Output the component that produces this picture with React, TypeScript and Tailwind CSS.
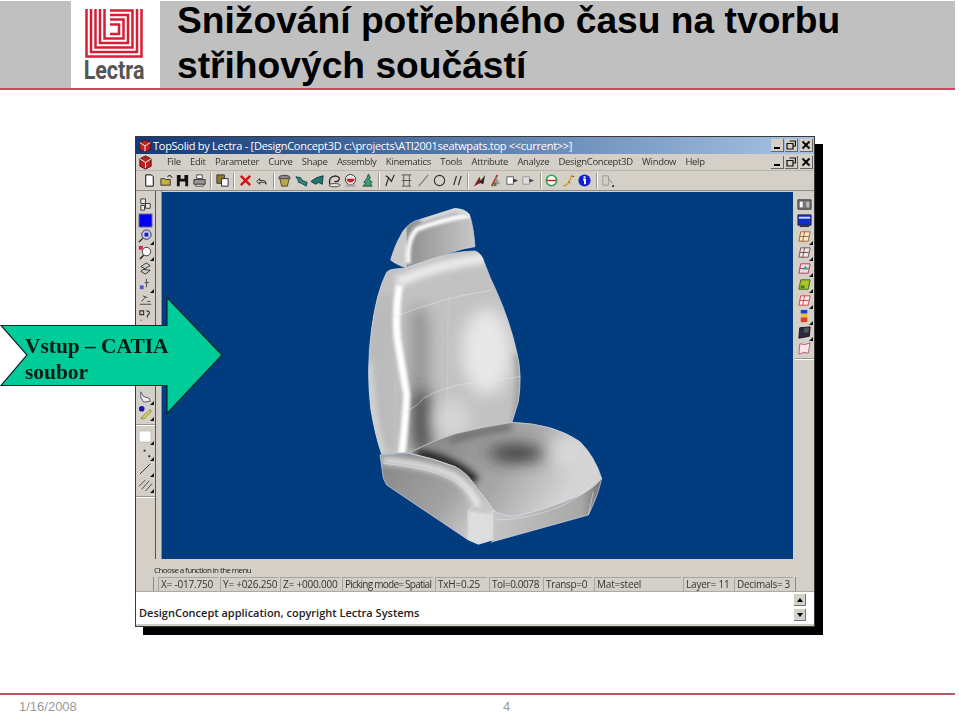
import React from "react";

const ui = "[font-family:'Open_Sans','Noto_Sans',sans-serif]";

type IconName = string;

function Glyph({ name }: { name: IconName }) {
  switch (name) {
    case "new":
      return <path d="M4 2h6l2 2v10H4z" fill="#fff" stroke="#000" />;
    case "open":
      return <><path d="M2 13V6h4l1 1h5v6z" fill="#c8b040" stroke="#333" /><path d="M9 4q3-3 5 1" fill="none" stroke="#000" /></>;
    case "save":
      return <path d="M2 2h4v4h4V2h4v12h-3V9H5v5H2z" fill="#111" />;
    case "print":
      return <><path d="M5 2h6v4H5z" fill="#fff" stroke="#444" /><path d="M2 7h12v5H2z" fill="#999" stroke="#333" /><path d="M4 12h8v2H4z" fill="#fff" stroke="#444" /></>;
    case "copy":
      return <><path d="M2 2h8v9H2z" fill="#8a7a30" stroke="#333" /><path d="M7 6h7v8H7z" fill="#fff" stroke="#224" /></>;
    case "x":
      return <path d="M3 3l10 10M13 3L3 13" stroke="#d81010" strokeWidth="2.6" />;
    case "undo":
      return <path d="M3 9l3-3v2h4q3 0 3 4q-2-3-4-2H6v2z" fill="none" stroke="#222" />;
    case "bucket":
      return <><ellipse cx="8" cy="5" rx="6" ry="2.5" fill="#888" stroke="#333" /><path d="M3 6l2 8h6l2-8z" fill="#b8a848" stroke="#444" /></>;
    case "teal1":
      return <path d="M2 4l5 1 2 3 5 2-1 4-5-3-3-1-1-3z" fill="#2a8a80" stroke="#145" />;
    case "teal2":
      return <path d="M1 9l6-4 7-2-1 9-4-2-3 2z" fill="#1a7a70" stroke="#134" />;
    case "swirl":
      return <><path d="M3 12q-2-8 6-9 5 1 4 4-1 3-5 2" fill="none" stroke="#222" strokeWidth="1.3" /><ellipse cx="8" cy="13" rx="6" ry="1.8" fill="#ddd" stroke="#444" /></>;
    case "red":
      return <><circle cx="8" cy="7" r="5.5" fill="#e8e8e8" stroke="#333" /><path d="M4 8q4 4 8 0v-2H4z" fill="#c82020" /><ellipse cx="8" cy="13.5" rx="6" ry="1.5" fill="#aaa" /></>;
    case "tree":
      return <path d="M9 1l2 4-1 2 3 3-2 1 2 3H3l3-3-2-1 3-4z" fill="#3a9a70" stroke="#255" />;
    case "corner":
      return <path d="M3 14l3-9 3 4 3-7M6 5l-3-2" fill="none" stroke="#222" strokeWidth="1.2" />;
    case "frame":
      return <path d="M3 2h10M3 14h10M5 2v12M11 2v12M3 8h10" fill="none" stroke="#555" />;
    case "line":
      return <path d="M3 14L13 2" stroke="#777" strokeWidth="1.2" />;
    case "circle":
      return <circle cx="8" cy="8" r="5.5" fill="none" stroke="#333" strokeWidth="1.2" />;
    case "par":
      return <path d="M5 13L8 3M10 13l3-10" stroke="#333" strokeWidth="1.3" />;
    case "dark":
      return <><path d="M2 14L8 4l2 6z" fill="#802020" /><path d="M8 10l6-8-2 10z" fill="#222" /></>;
    case "mix":
      return <><path d="M4 14L10 2" stroke="#b03030" strokeWidth="2" /><path d="M8 3l5 9H8z" fill="#999" /><path d="M6 10h3v4H6z" fill="#3a8a4a" /></>;
    case "box":
      return <><path d="M2 4h7v8H2z" fill="#fff" stroke="#555" /><path d="M9 6l5 2-5 2z" fill="#333" /></>;
    case "box2":
      return <><path d="M2 4h7v8H2z" fill="#ddd" stroke="#999" /><path d="M9 6l5 2-5 2z" fill="#444" /></>;
    case "ring":
      return <><circle cx="8" cy="8" r="5.5" fill="#fff" stroke="#3a9a50" strokeWidth="1.6" /><path d="M3 8h10" stroke="#c82020" strokeWidth="1.6" /></>;
    case "curve":
      return <><path d="M2 14q7-1 9-11" fill="none" stroke="#c8a020" strokeWidth="1.4" /><path d="M11 3l3 1M8 9l2 2" stroke="#c02020" /></>;
    case "info":
      return <><circle cx="8" cy="8" r="6.5" fill="#1020d0" /><path d="M8 3.5v2M6.5 7H8.5v5" stroke="#fff" strokeWidth="2" fill="none" /></>;
    case "disabled":
      return <><path d="M3 3h6v10H3z" fill="none" stroke="#999" /><path d="M9 6l4 5" stroke="#888" /><path d="M13 13h2v2h-2z" fill="#333" /></>;
    case "cluster":
      return <><path d="M3 2h5v5H3zM8 7h5v5H8zM3 9h4v5H3z" fill="#eee" stroke="#333" /></>;
    case "blue":
      return <path d="M1 1h14v14H1z" fill="#0000f0" stroke="#7a7a90" />;
    case "lens":
      return <><circle cx="9" cy="6" r="5" fill="#bcc8ff" stroke="#334" /><path d="M7 4h4v4H7z" fill="#2020a0" /><path d="M5 10l-4 4" stroke="#222" strokeWidth="1.5" /></>;
    case "lens2":
      return <><circle cx="9" cy="7" r="4.5" fill="#fff" stroke="#333" /><path d="M6 11l-4 4" stroke="#222" strokeWidth="1.5" /><path d="M1 1h4v4H1z" fill="#e02040" /></>;
    case "knot":
      return <path d="M3 6l6-4 4 3-7 4 7 1-5 4-5-3 4-3z" fill="#ccc" stroke="#333" />;
    case "move":
      return <><path d="M2 9h4v4H2z" fill="#5050d0" /><path d="M9 2v9M7 6h5" stroke="#444" /></>;
    case "dims":
      return <path d="M2 12h12M4 9l4-5M5 3l5 2M10 9h3" fill="none" stroke="#444" />;
    case "query":
      return <path d="M2 2h4v4H2zM9 2q4 0 3 3l-2 2v2M3 12h1" fill="none" stroke="#333" strokeWidth="1.2" />;
    case "clip":
      return <path d="M3 3l3 5 6 2 1 3-7 1-3-5z" fill="#eee" stroke="#556" />;
    case "key":
      return <><circle cx="4" cy="4" r="3" fill="#1818a0" /><path d="M3 14l10-9 1 2-8 8z" fill="#e8e030" stroke="#444" strokeWidth=".6" /></>;
    case "white":
      return <path d="M1 2h13v12H1z" fill="#fff" stroke="#bbb" />;
    case "dot":
      return <path d="M6 5h2v2H6zM11 11h2v2h-2z" fill="#222" />;
    case "diag":
      return <path d="M2 14L13 3" stroke="#333" />;
    case "hatch":
      return <path d="M1 10l7-7M4 13l8-9M8 15l7-8" stroke="#444" />;
    case "win":
      return <><path d="M1 3h14v10H1z" fill="#777" stroke="#333" /><path d="M3 5h3v6H3z" fill="#fff" /><path d="M10 5h3v6h-3z" fill="#bbb" /></>;
    case "blueprint":
      return <><path d="M1 2h14v11H1z" fill="#1030c8" stroke="#223" /><path d="M2 4h12v2H2z" fill="#dde" /><path d="M3 13h10v2H3z" fill="#334" /></>;
    case "g1":
      return <path d="M4 3h10l-2 10H2zM3 8h10M8 3l-2 10" fill="#f8e8d0" stroke="#a06030" />;
    case "g2":
      return <path d="M4 3h10l-2 10H2zM3 8h10M8 3l-2 10" fill="#f0e8e0" stroke="#705050" />;
    case "g3":
      return <><path d="M4 3h10l-2 10H2zM3 8h10" fill="#f0dce0" stroke="#a04060" /><path d="M6 9l3-4 3 4z" fill="#30a890" /></>;
    case "g4":
      return <><path d="M4 3h10l-2 10H2z" fill="#a8c820" stroke="#406030" /><path d="M6 5h3v3H6z" fill="#e8b020" /><path d="M4 9h4v3H4z" fill="#308030" /></>;
    case "g5":
      return <path d="M4 3h10l-2 10H2zM3 8h10M8 3l-2 10" fill="#fbeaea" stroke="#d04050" />;
    case "spectrum":
      return <><path d="M4 1h7v4H4z" fill="#1840d0" /><path d="M4 5h7v4H4z" fill="#e8c030" /><path d="M4 9h7v5H4z" fill="#e04020" /></>;
    case "solid":
      return <><path d="M3 3l11-1-1 10-11 2z" fill="#2a2a40" stroke="#111" /><path d="M8 3l5 0-1 5H7z" fill="#555" /></>;
    case "flag":
      return <path d="M3 3q5 2 11-1l-2 11q-4-2-10 1z" fill="#f8e4e8" stroke="#b06070" />;
    default:
      return null;
  }
}

function Icon({ name, flyout = false }: { name: IconName; flyout?: boolean }) {
  return (
    <div className="relative w-[16px] h-[16px] shrink-0">
      <svg viewBox="0 0 16 16" className="w-[15px] h-[15px]">
        <Glyph name={name} />
      </svg>
      {flyout && (
        <svg viewBox="0 0 4 4" className="absolute right-0 bottom-0 w-[4px] h-[4px]">
          <path d="M4 0v4H0z" fill="#111" />
        </svg>
      )}
    </div>
  );
}

function TopGroup({ icons }: { icons: string[] }) {
  return (
    <div className="flex gap-[0.5px]">
      {icons.map((n, i) => (
        <Icon key={i} name={n} />
      ))}
    </div>
  );
}

function Sep() {
  return <div className="w-[2px] h-[16px] mx-[2.5px] border-l border-l-[#9a978f] border-r border-r-white shrink-0" />;
}

function WinButtons() {
  return (
    <div className="flex gap-px">
      <div className="w-[13px] h-[13px] bg-[#d4d0c8] border-r border-b border-[#666] flex items-end justify-center pb-[2px]">
        <div className="w-[6px] h-[2px] bg-black" />
      </div>
      <div className="w-[13px] h-[13px] bg-[#d4d0c8] border-r border-b border-[#666] flex items-center justify-center">
        <svg viewBox="0 0 10 10" className="w-[10px] h-[10px]">
          <path d="M3.5 1h6v5H7.5M1 3.5h6v5.5H1z" fill="none" stroke="#111" strokeWidth="1.2" />
        </svg>
      </div>
      <div className="w-[13px] h-[13px] ml-px bg-[#d4d0c8] border-r border-b border-[#666] flex items-center justify-center">
        <svg viewBox="0 0 10 10" className="w-[10px] h-[10px]">
          <path d="M1.5 1.5l7 7M8.5 1.5l-7 7" stroke="#000" strokeWidth="1.9" />
        </svg>
      </div>
    </div>
  );
}

function Logo() {
  return (
    <div className="w-[89px] h-[87px] bg-white flex flex-col items-center pt-[8px] pr-[3px] shrink-0">
      <svg viewBox="0 0 58 49" className="w-[58px] h-[49px]">
        <g fill="none" stroke="#d81e36" strokeWidth="2.5">
          <path d="M1.5 0V47.5H56.5V0" />
          <path d="M6 0V43H52V0" />
          <path d="M10.5 0V38.5H47.5V1.5H25" />
          <path d="M15 0V34H43V6H25" />
          <path d="M19.5 0V29.5H38.5V10.5H25" />
          <path d="M25 15.5H34V25H25" />
        </g>
      </svg>
      <div className="mt-[1px] h-[24px] w-[58px] flex justify-center text-[25px] leading-[24px] font-bold text-[#555555] scale-x-[.86] [font-family:'Roboto',sans-serif]">
        Lectra
      </div>
    </div>
  );
}

const BACK = "M140 232Q150 222 165 222L200 218Q260 195 335 175Q380 168 405 168Q425 175 432 200Q450 250 470 290Q510 380 530 470Q548 540 535 620L515 685L210 772L125 778Q105 720 92 640Q78 520 95 400Q110 290 140 232Z";
const HEAD = "M152 195Q165 150 180 125Q195 92 225 78L345 40Q375 42 388 58Q400 90 405 155Q370 160 335 172L200 218Q170 210 152 195Z";
const CUSH = "M210 772Q280 735 350 715Q430 695 515 682Q640 685 720 740Q765 785 785 850Q760 880 720 900Q620 945 520 965Q480 960 460 945Q430 900 410 880Q385 835 345 815Q280 790 210 775Z";
const BOLS = "M120 780L210 775Q280 790 345 815Q385 835 410 880Q430 900 460 945L458 1035L415 1048L385 1035L140 870L130 850Z";
const FRONT = "M460 945Q480 960 520 965Q620 945 720 900Q760 880 785 850Q775 900 745 960L458 1040Z";

function Seat() {
  return (
    <svg viewBox="0 0 870 1080" className="w-[290px] h-[360px]">
      <defs>
        <filter id="b3" filterUnits="userSpaceOnUse" x="0" y="0" width="870" height="1080"><feGaussianBlur stdDeviation="4" /></filter>
        <filter id="b8" filterUnits="userSpaceOnUse" x="0" y="0" width="870" height="1080"><feGaussianBlur stdDeviation="9" /></filter>
        <filter id="b20" filterUnits="userSpaceOnUse" x="0" y="0" width="870" height="1080"><feGaussianBlur stdDeviation="24" /></filter>
        <clipPath id="cb"><path d={BACK} /></clipPath>
        <clipPath id="ch"><path d={HEAD} /></clipPath>
        <clipPath id="cc"><path d={CUSH} /></clipPath>
        <clipPath id="cl"><path d={BOLS} /></clipPath>
        <linearGradient id="headg" x1="200" y1="0" x2="405" y2="0" gradientUnits="userSpaceOnUse">
          <stop offset="0" stopColor="#8f8f8f" />
          <stop offset="1" stopColor="#c8c8c8" />
        </linearGradient>
        <linearGradient id="cushg" x1="300" y1="720" x2="640" y2="950" gradientUnits="userSpaceOnUse">
          <stop offset="0" stopColor="#8a8a8a" />
          <stop offset=".55" stopColor="#a8a8a8" />
          <stop offset="1" stopColor="#d4d4d4" />
        </linearGradient>
        <linearGradient id="bolg" x1="140" y1="800" x2="420" y2="1010" gradientUnits="userSpaceOnUse">
          <stop offset="0" stopColor="#8a8a8a" />
          <stop offset=".6" stopColor="#a2a2a2" />
          <stop offset="1" stopColor="#d0d0d0" />
        </linearGradient>
        <linearGradient id="frontg" x1="460" y1="0" x2="790" y2="0" gradientUnits="userSpaceOnUse">
          <stop offset="0" stopColor="#c4c4c4" />
          <stop offset=".8" stopColor="#a8a8a8" />
          <stop offset="1" stopColor="#6e6e6e" />
        </linearGradient>
      </defs>

      <path d={HEAD} fill="url(#headg)" />
      <g clipPath="url(#ch)">
        <path d="M140 90H200V230H140Z" fill="#c9c9c9" />
        <path d="M205 205Q200 130 232 102Q300 75 395 60" fill="none" stroke="#fff" strokeWidth="14" filter="url(#b3)" />
        <path d="M240 70L345 35L392 50" fill="none" stroke="#d8d8d8" strokeWidth="30" filter="url(#b3)" />
      </g>
      <path d={HEAD} fill="none" stroke="#cfd6e2" strokeWidth="2" />

      <path d={BACK} fill="#c2c2c2" />
      <g clipPath="url(#cb)">
        <path d="M60 300V760H160V300Z" fill="#bbbbbb" filter="url(#b3)" />
        <path d="M235 340Q245 460 235 600" fill="none" stroke="#8a8a8a" strokeWidth="46" filter="url(#b20)" />
        <path d="M245 590Q235 690 250 775" fill="none" stroke="#3c3c3c" strokeWidth="50" filter="url(#b20)" />
        <ellipse cx="440" cy="470" rx="75" ry="130" fill="#ffffff" opacity=".62" filter="url(#b20)" />
        <ellipse cx="340" cy="670" rx="50" ry="60" fill="#d6d6d6" filter="url(#b20)" />
        <path d="M178 270Q165 350 172 430Q190 540 200 600Q195 700 185 775" fill="none" stroke="#fff" strokeWidth="22" filter="url(#b3)" />
        <path d="M170 262Q300 205 440 188" fill="none" stroke="#ececec" strokeWidth="30" filter="url(#b8)" />
        <path d="M88 500Q92 640 125 770" fill="none" stroke="#e4e4e4" strokeWidth="12" filter="url(#b8)" />
        <path d="M530 480Q548 560 525 680" fill="none" stroke="#8e8e8e" strokeWidth="14" filter="url(#b8)" />
      </g>
      <g fill="none" stroke="#e6e6e6" strokeWidth="1.5">
        <path d={BACK} stroke="#d8dde6" strokeWidth="2" />
        <path d="M165 365Q300 310 455 285" />
        <path d="M180 652Q230 640 250 610Q310 575 385 565Q460 555 540 545" />
        <path d="M325 300Q322 500 322 735" opacity=".4" />
        <path d="M165 235Q195 260 190 275" />
      </g>

      <path d={BOLS} fill="url(#bolg)" />
      <g clipPath="url(#cl)">
        <path d="M125 795Q280 810 345 845Q395 880 415 935" fill="none" stroke="#f0f0f0" strokeWidth="20" filter="url(#b8)" />
        <path d="M385 945L455 960V1050H385Z" fill="#dedede" filter="url(#b3)" />
      </g>
      <path d={FRONT} fill="url(#frontg)" />
      <path d={CUSH} fill="url(#cushg)" />
      <g clipPath="url(#cc)">
        <path d="M230 778Q340 795 405 860" fill="none" stroke="#2a2a2a" strokeWidth="34" filter="url(#b8)" />
        <ellipse cx="530" cy="775" rx="85" ry="24" fill="#333333" filter="url(#b20)" />
        <path d="M330 735Q430 705 515 695" fill="none" stroke="#707070" strokeWidth="22" filter="url(#b8)" />
        <ellipse cx="690" cy="770" rx="55" ry="55" fill="#d8d8d8" filter="url(#b20)" />
      </g>
      <g fill="none" stroke="#e8ebf0" strokeWidth="1.6">
        <path d={CUSH} strokeWidth="2" stroke="#d8dde6" />
        <path d={BOLS} strokeWidth="2" stroke="#d8dde6" />
        <path d={FRONT} strokeWidth="2" stroke="#d8dde6" />
        <path d="M130 805Q280 820 345 860Q395 895 415 935" />
        <path d="M385 945Q387 1000 385 1035M455 960Q458 1000 455 1045M385 945L415 925" />
        <path d="M465 975Q560 975 660 935Q720 910 762 860" />
        <path d="M745 960L760 890" />
      </g>
    </svg>
  );
}

const leftTop: [string, boolean][] = [
  ["cluster", false], ["blue", false], ["lens", true], ["lens2", true],
  ["knot", false], ["move", true], ["dims", false], ["query", false],
];
const leftBottom: [string, boolean][] = [["clip", true], ["key", true]];
const leftLast: [string, boolean][] = [["white", true], ["dot", true], ["diag", true], ["hatch", true]];
const rightIcons: [string, boolean][] = [
  ["win", false], ["blueprint", false], ["g1", true], ["g2", true], ["g3", true],
  ["g4", true], ["g5", true], ["spectrum", true], ["solid", true], ["flag", false],
];

const menu = [
  "File", "Edit", "Parameter", "Curve", "Shape", "Assembly", "Kinematics",
  "Tools", "Attribute", "Analyze", "DesignConcept3D", "Window", "Help",
];

const fields = [
  { w: "w-[60px]", t: "X= -017.750", k: "tracking-[-0.2px]" },
  { w: "w-[58px]", t: "Y= +026.250", k: "tracking-[-0.2px]" },
  { w: "w-[60px]", t: "Z= +000.000", k: "tracking-[-0.2px]" },
  { w: "w-[91px]", t: "Picking mode= Spatial", k: "tracking-[-0.75px]" },
  { w: "w-[52px]", t: "TxH=0.25", k: "tracking-[-0.2px]" },
  { w: "w-[52px]", t: "Tol=0.0078", k: "tracking-[-0.4px]" },
  { w: "w-[49px]", t: "Transp=0", k: "tracking-[-0.3px]" },
  { w: "w-[87px]", t: "Mat=steel", k: "tracking-[-0.2px]" },
  { w: "w-[49px]", t: "Layer= 11", k: "tracking-[-0.2px]" },
  { w: "w-[59px]", t: "Decimals= 3", k: "tracking-[-0.3px]" },
];

function AppWindow() {
  return (
    <div className={`w-[680px] h-[491px] bg-[#d4d0c8] border border-[#3a3a3a] shadow-[8px_8px_0_#000] flex flex-col blur-[0.35px] ${ui}`}>
      <div className="h-[17px] flex items-center pl-[2px] pr-[1px] bg-gradient-to-r from-[#123a78] to-[#a8c4e4]">
        <svg viewBox="0 0 16 16" className="w-[14px] h-[14px] shrink-0">
          <path d="M8 1l6 3v8l-6 3-6-3V4z" fill="#c02020" stroke="#501010" />
          <path d="M8 8v6M2 4l6 4 6-4" stroke="#fff" fill="none" />
        </svg>
        <span className="ml-[1px] text-[11px] leading-none text-white tracking-[-0.27px] whitespace-nowrap flex-1">
          {"TopSolid by Lectra - [DesignConcept3D c:\\projects\\ATI2001seatwpats.top  <<current>>]"}
        </span>
        <WinButtons />
      </div>
      <div className="h-[17px] flex items-center pl-[2px] pr-[1px] border-b border-[#b8b5ad]">
        <svg viewBox="0 0 16 16" className="w-[15px] h-[15px] shrink-0">
          <path d="M8 1l6 3v8l-6 3-6-3V4z" fill="#c02020" stroke="#501010" />
          <path d="M8 8v6M2 4l6 4 6-4" stroke="#fff" fill="none" />
        </svg>
        <div className="ml-[14px] flex gap-[9.3px] flex-1 text-[9.5px] leading-none text-[#333] tracking-[-0.32px] whitespace-nowrap">
          {menu.map((m) => (
            <span key={m}>{m}</span>
          ))}
        </div>
        <WinButtons />
      </div>
      <div className="h-[20px] flex items-center pl-[6px] border-b border-[#8f8c85]">
        <TopGroup icons={["new", "open", "save", "print"]} />
        <Sep />
        <TopGroup icons={["copy"]} />
        <Sep />
        <TopGroup icons={["x", "undo"]} />
        <Sep />
        <TopGroup icons={["bucket", "teal1", "teal2", "swirl", "red", "tree"]} />
        <Sep />
        <TopGroup icons={["corner", "frame", "line", "circle", "par"]} />
        <Sep />
        <TopGroup icons={["dark", "mix", "box", "box2"]} />
        <Sep />
        <TopGroup icons={["ring", "curve", "info"]} />
        <Sep />
        <TopGroup icons={["disabled"]} />
      </div>
      <div className="h-[368px] flex">
        <div className="w-[20px] flex flex-col items-center pt-[6px] border-r border-[#555]">
          {leftTop.map(([n, f]) => (
            <Icon key={n} name={n} flyout={f} />
          ))}
          <div className="h-[64px] shrink-0" />
          {leftBottom.map(([n, f]) => (
            <Icon key={n} name={n} flyout={f} />
          ))}
          <div className="w-full h-[2px] my-[3px] border-t border-[#9a978f] border-b border-b-white shrink-0" />
          {leftLast.map(([n, f]) => (
            <Icon key={n} name={n} flyout={f} />
          ))}
          <div className="w-full h-[2px] mt-[3px] border-t border-[#9a978f] border-b border-b-white shrink-0" />
        </div>
        <div className="w-[6px] border-r border-[#8f8c85]" />
        <div className="w-[631px] h-[368px] bg-[#003c7e] border-t border-t-[#d4d0c8] flex pl-[178px] pt-[3px]">
          <Seat />
        </div>
        <div className="flex-1 flex flex-col items-center pt-[6px] pl-[2px]">
          {rightIcons.map(([n, f]) => (
            <Icon key={n} name={n} flyout={f} />
          ))}
          <div className="w-full h-[2px] mt-[1px] border-t border-[#9a978f] border-b border-b-white shrink-0" />
        </div>
      </div>
      <div className="h-[33px] flex flex-col border-b border-[#aaa]">
        <div className="h-[18px] flex items-end pl-[18px] pb-[3px] text-[8px] leading-none text-[#222] tracking-[-0.6px] whitespace-nowrap">
          Choose a function in the menu
        </div>
        <div className="h-[14px] flex gap-[2px] pl-[19px] pr-[20px]">
          <div className="w-[3px] h-full border-l border-[#888] shrink-0 -ml-[2px]" />
          {fields.map((f) => (
            <div
              key={f.t}
              className={`${f.w} ${f.k} h-full shrink-0 border-t border-l border-[#a8a59e] pl-[2px] text-[10px] leading-[13px] text-[#333] whitespace-nowrap overflow-hidden`}
            >
              {f.t}
            </div>
          ))}
          <div className="w-[3px] h-full border-l border-[#888] shrink-0" />
        </div>
      </div>
      <div className="flex-1 flex bg-white">
        <div className="flex-1 flex items-end pl-[3px] pb-[3px] text-[11px] font-semibold leading-[16px] text-[#222] whitespace-nowrap">
          DesignConcept application, copyright Lectra Systems
        </div>
        <div className="w-[20px] flex flex-col gap-[3px] pt-[2px]">
          <div className="w-[12px] h-[12px] bg-[#d4d0c8] border-r border-b border-[#777] flex items-center justify-center">
            <svg viewBox="0 0 6 4" className="w-[6px] h-[4px]"><path d="M3 0l3 4H0z" fill="#000" /></svg>
          </div>
          <div className="w-[12px] h-[12px] bg-[#d4d0c8] border-r border-b border-[#777] flex items-center justify-center">
            <svg viewBox="0 0 6 4" className="w-[6px] h-[4px]"><path d="M3 4l3-4H0z" fill="#000" /></svg>
          </div>
        </div>
      </div>
      <div className="h-[2px] bg-[#cfccc4] shrink-0" />
    </div>
  );
}

export default function App() {
  return (
    <div className="relative w-[959px] h-[714px] bg-white overflow-hidden flex flex-col [font-family:'Liberation_Sans',Arial,sans-serif]">
      <header className="pt-px h-[90px] shrink-0 w-[955px]">
        <div className="h-[87px] flex bg-[#c0c0c0]">
          <div className="w-[71px] shrink-0" />
          <Logo />
          <h1 className="pl-[17px] text-[37.2px] leading-[45px] font-bold text-black -mt-[3px] whitespace-pre">
            {"Snižování potřebného času na tvorbu\nstřihových součástí"}
          </h1>
        </div>
        <div className="h-[2px] bg-[#c8485a]" />
      </header>
      <main className="flex-1 pt-[46px] pl-[135px]">
        <AppWindow />
      </main>
      <footer className="h-[21px] shrink-0 w-[955px]">
        <div className="h-[2px] bg-[#b55a5f]" />
        <div className="flex text-[13px] leading-[18px] text-[#9a9a9a] pt-[3px] pl-[19px]">
          <span className="w-[484px]">1/16/2008</span>
          <span>4</span>
        </div>
      </footer>
      <div className="absolute left-0 top-[296px] w-[224px] h-[120px]">
        <svg viewBox="0 0 224 120" className="absolute inset-0 w-[224px] h-[120px]">
          <path d="M1 29.5H167V1.5L222 59L167 117.5V89.5H1L27 59Z" fill="#00cc99" stroke="#102a28" strokeWidth="1.2" />
        </svg>
        <div className="absolute left-[25px] top-[37px] [font-family:'Liberation_Serif',serif] font-bold text-[21.4px] leading-[26px] text-[#0a1a14] whitespace-nowrap">
          <div>Vstup – CATIA</div>
          <div>soubor</div>
        </div>
      </div>
    </div>
  );
}
